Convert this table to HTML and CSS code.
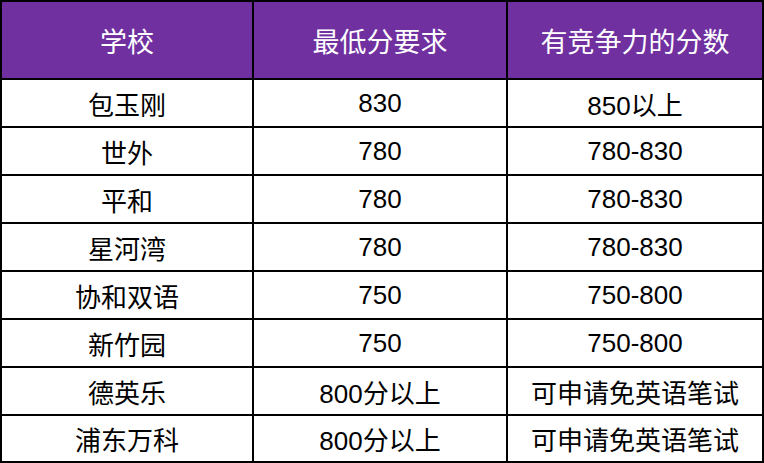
FILE: index.html
```html
<!DOCTYPE html>
<html lang="zh-CN">
<head>
<meta charset="utf-8">
<link rel="stylesheet" href="styles.css">
</head>
<body>
<table class="score-table">
  <colgroup>
    <col class="c1"><col class="c2"><col class="c3">
  </colgroup>
  <thead>
    <tr><th>学校</th><th>最低分要求</th><th>有竞争力的分数</th></tr>
  </thead>
  <tbody>
    <tr><td>包玉刚</td><td>830</td><td>850以上</td></tr>
    <tr><td>世外</td><td>780</td><td>780-830</td></tr>
    <tr><td>平和</td><td>780</td><td>780-830</td></tr>
    <tr><td>星河湾</td><td>780</td><td>780-830</td></tr>
    <tr><td>协和双语</td><td>750</td><td>750-800</td></tr>
    <tr><td>新竹园</td><td>750</td><td>750-800</td></tr>
    <tr><td>德英乐</td><td>800分以上</td><td>可申请免英语笔试</td></tr>
    <tr class="last"><td>浦东万科</td><td>800分以上</td><td>可申请免英语笔试</td></tr>
  </tbody>
</table>
</body>
</html>
```

FILE: styles.css
```css
html, body {
  margin: 0;
  padding: 0;
  background: #ffffff;
}
.score-table {
  border-collapse: separate;
  border-spacing: 2px;
  background: #000000;
  table-layout: fixed;
  width: 764px;
  font-family: "Liberation Sans", "Noto Sans CJK SC", sans-serif;
}
.c1 { width: 250px; }
.c2 { width: 252px; }
.c3 { width: 254px; }
.score-table th,
.score-table td {
  padding: 0;
  text-align: center;
  vertical-align: middle;
  white-space: nowrap;
  overflow: hidden;
}
.score-table th {
  height: 76px;
  background: #7030a0;
  color: #ffffff;
  font-size: 27px;
  font-weight: normal;
}
.score-table td {
  height: 46px;
  background: #ffffff;
  color: #000000;
  font-size: 26px;
}
.score-table tr.last td {
  height: 45px;
}
```
